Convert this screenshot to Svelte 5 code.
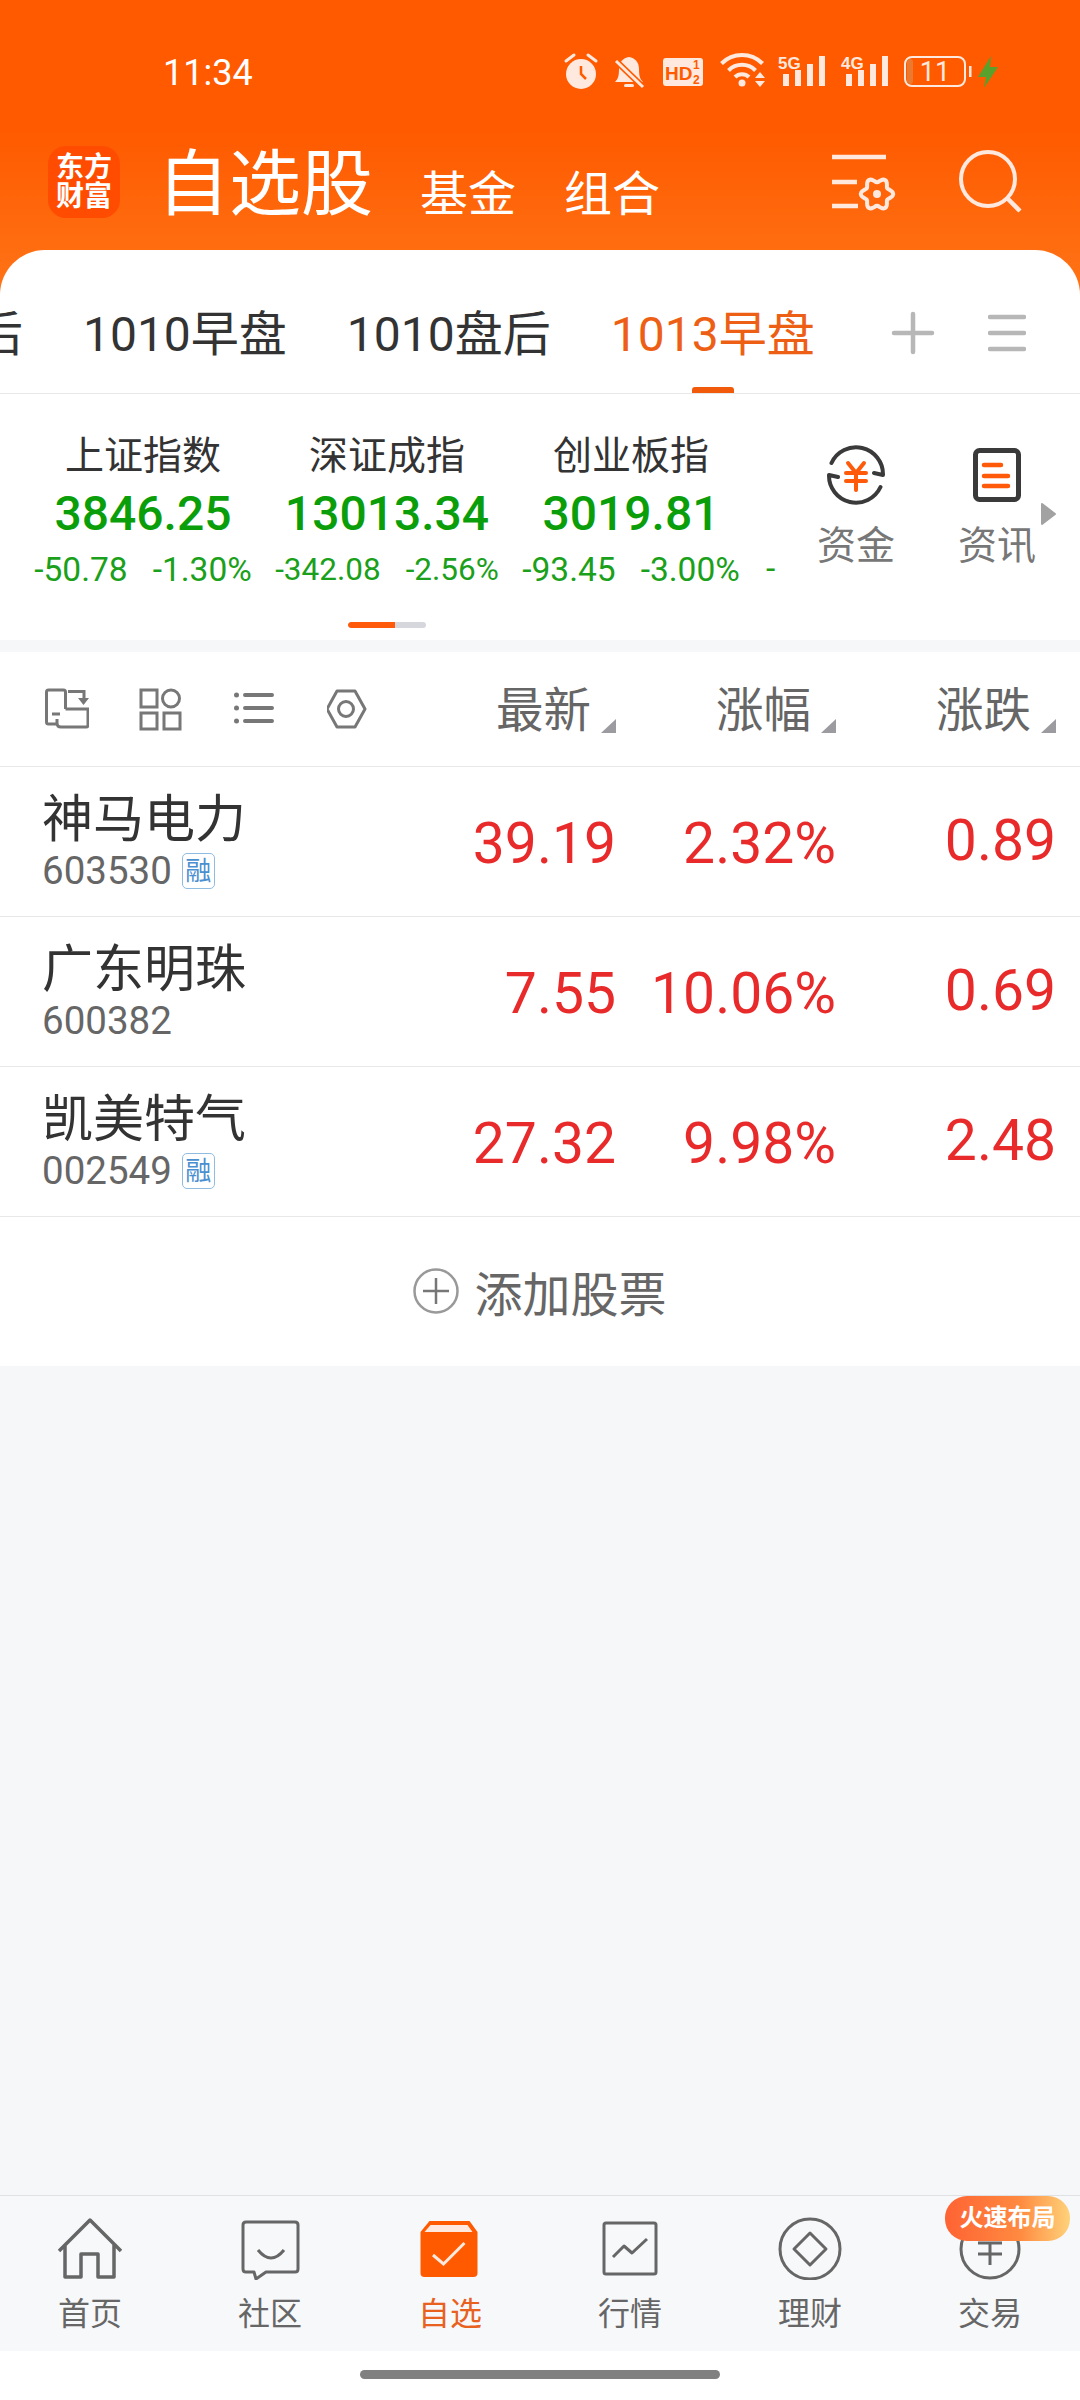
<script>
  const tabs = [
    { label: '1010盘后', first: true },
    { label: '1010早盘' },
    { label: '1010盘后' },
    { label: '1013早盘', active: true }
  ]

  const indices = [
    { name: '上证指数', value: '3846.25', diff: '-50.78', pct: '-1.30%' },
    { name: '深证成指', value: '13013.34', diff: '-342.08', pct: '-2.56%', tight: true },
    { name: '创业板指', value: '3019.81', diff: '-93.45', pct: '-3.00%' }
  ]

  const stocks = [
    { name: '神马电力', code: '603530', margin: true, price: '39.19', pct: '2.32%', diff: '0.89' },
    { name: '广东明珠', code: '600382', margin: false, price: '7.55', pct: '10.06%', diff: '0.69' },
    { name: '凯美特气', code: '002549', margin: true, price: '27.32', pct: '9.98%', diff: '2.48' }
  ]

  const columns = ['最新', '涨幅', '涨跌']

  const nav = [
    { key: 'home', label: '首页' },
    { key: 'chat', label: '社区' },
    { key: 'fav', label: '自选', active: true },
    { key: 'chart', label: '行情' },
    { key: 'wealth', label: '理财' },
    { key: 'trade', label: '交易' }
  ]

  // scalloped outline of the settings cog
  function gearPath (cx, cy) {
    let d = ''
    for (let i = 0; i <= 72; i++) {
      const t = (i / 72) * Math.PI * 2
      const r = 14 + 2.2 * Math.cos(6 * t)
      d += `${i ? 'L' : 'M'}${(cx + r * Math.cos(t)).toFixed(1)} ${(cy + r * Math.sin(t)).toFixed(1)}`
    }
    return d + 'Z'
  }
</script>

<div class="page">
  <header class="head">
    <div class="status">
      <span class="time">11:34</span>
      <svg class="status-icons" width="445" height="44" viewBox="0 0 445 44">
        <!-- alarm -->
        <circle cx="21" cy="25" r="15" fill="#ffe9de" />
        <path d="M6 12l8-6M28 6l8 6" stroke="#ffe9de" stroke-width="3" stroke-linecap="round" />
        <path d="M21 17v8l5 5" stroke="#ff5a00" stroke-width="2.5" fill="none" />
        <!-- muted bell -->
        <path d="M55 33c3-3 4-6 4-13 0-7 4-11 10-12 6 1 10 5 10 12 0 7 1 10 4 13z" fill="#ffe9de" />
        <rect x="64" y="35" width="10" height="3" rx="1.5" fill="#ffe9de" />
        <path d="M55 11l28 27" stroke="#ff5a00" stroke-width="6" />
        <path d="M56 12l27 26" stroke="#ffe9de" stroke-width="3" />
        <!-- HD -->
        <rect x="103" y="9" width="40" height="28" rx="3" fill="#ffe9de" />
        <text x="105" y="31" class="hd">HD</text>
        <text x="133" y="20" class="frac">1</text>
        <text x="133" y="35" class="frac">2</text>
        <!-- wifi -->
        <circle cx="182" cy="34" r="3.5" fill="#ffe9de" />
        <path d="M161.500 14.500a29 29 0 0 1 41 0M168.500 21.500a19 19 0 0 1 27 0M175 28a10 10 0 0 1 14 0" stroke="#ffe9de" stroke-width="4" fill="none" />
        <path d="M200 23l5 6h-10zM200 38l5-6h-10z" fill="#ffe9de" />
        <!-- signal -->
        <text x="218" y="20" class="net">5G</text>
        <path d="M223 25h6v12h-6zM235 21h6v16h-6zM247 15h6v22h-6zM259 7h6v30h-6z" fill="#ffe9de" />
        <text x="281" y="20" class="net">4G</text>
        <path d="M286 25h6v12h-6zM298 21h6v16h-6zM310 15h6v22h-6zM322 7h6v30h-6z" fill="#ffe9de" />
        <!-- battery -->
        <rect x="345" y="8" width="60" height="29" rx="7" fill="none" stroke="#ffe9de" stroke-width="2" />
        <rect x="347" y="10" width="6" height="25" rx="3" fill="#ea7a30" />
        <rect x="409" y="17" width="2.500" height="11" fill="#ffe9de" />
        <text x="375" y="32" class="batt">11</text>
        <path d="M431 7l-13 21h8l-2 11 14-21h-8z" fill="#5aa02c" />
      </svg>
    </div>
    <div class="bar">
      <div class="logo"><span>东方</span><span>财富</span></div>
      <h1>自选股</h1>
      <span class="sub first">基金</span>
      <span class="sub">组合</span>
      <svg class="settings" width="66" height="72" viewBox="0 0 66 72">
        <path d="M2 11h54M2 36h25M2 60h26" stroke="#ffe9de" stroke-width="4.500" />
        <path d={gearPath(47, 48)} fill="none" stroke="#ffe9de" stroke-width="4" />
        <circle cx="47" cy="48" r="4" fill="#ffe9de" />
      </svg>
      <svg class="search" width="70" height="72" viewBox="0 0 70 72">
        <circle cx="32" cy="33" r="27" fill="none" stroke="#ffe9de" stroke-width="4" />
        <path d="M51 52l13 13" stroke="#ffe9de" stroke-width="4.500" />
      </svg>
    </div>
  </header>

  <section class="sheet">
    <div class="tabs">
      <div class="tab-list">
        {#each tabs as tab}
          <div class="tab" class:first={tab.first} class:active={tab.active}>
            {tab.label}
            {#if tab.active}<i class="mark"></i>{/if}
          </div>
        {/each}
      </div>
      <svg class="plus" width="44" height="44" viewBox="0 0 44 44">
        <path d="M3 22h38M22 3v38" stroke="#b7b7b7" stroke-width="4.500" stroke-linecap="round" />
      </svg>
      <svg class="menu" width="38" height="40" viewBox="0 0 38 40">
        <path d="M2 4h34M2 20h34M2 36h34" stroke="#b7b7b7" stroke-width="4.500" stroke-linecap="round" />
      </svg>
    </div>

    <div class="market">
      <div class="market-top">
        <div class="indices">
          {#each indices as item}
            <div class="index">
              <div class="index-name">{item.name}</div>
              <div class="index-value">{item.value}</div>
              <div class="index-diff" class:tight={item.tight}><span>{item.diff}</span><span>{item.pct}</span></div>
            </div>
          {/each}
          <div class="index-dash">-</div>
        </div>
        <div class="shortcut">
          <svg width="60" height="60" viewBox="0 0 60 60">
            <path d="M5.500 18A27 27 0 0 1 57 30l-9-2M3 30l9 2M3 30a27 27 0 0 0 51.500 12" fill="none" stroke="#3a3a3a" stroke-width="4" stroke-linecap="round" stroke-linejoin="round" />
            <path d="M22 18l8 10 8-10M20 28h20M20 36h20M30 28v17" fill="none" stroke="#ff5a0a" stroke-width="4" stroke-linecap="round" />
          </svg>
          <span>资金</span>
        </div>
        <div class="shortcut">
          <svg width="60" height="60" viewBox="0 0 60 60">
            <rect x="7.500" y="5.500" width="43" height="49" rx="4" fill="none" stroke="#3a3a3a" stroke-width="5" />
            <path d="M16 20h17M16 31h24M16 41h24" stroke="#ff5a0a" stroke-width="4.500" stroke-linecap="round" />
          </svg>
          <span>资讯</span>
        </div>
        <svg class="more" width="15" height="24" viewBox="0 0 15 24"><path d="M1 2l13 10L1 22z" fill="#a2a2a2" stroke="#a2a2a2" stroke-width="2" stroke-linejoin="round" /></svg>
      </div>
      <div class="pager"><i></i></div>
    </div>

    <div class="columns">
      <div class="tools">
        <svg width="44" height="44" viewBox="0 0 44 44" fill="none" stroke="#777" stroke-width="3">
          <path d="M20.500 22V5q0-2-2-2H3.500q-2 0-2 2v30q0 2 2 2H12" />
          <path d="M7 27h8M23 4.500h16V12" />
          <path d="M33 11h11l-5.500 7z" fill="#777" stroke="none" />
          <path d="M20.500 22H43v16q0 2-2 2H16q-4 0-4-4v-4" />
        </svg>
        <svg width="44" height="44" viewBox="0 0 44 44" fill="none" stroke="#777" stroke-width="3">
          <rect x="2" y="3" width="16" height="17" />
          <circle cx="32" cy="11.500" r="8.500" />
          <rect x="2" y="26" width="16" height="16" />
          <rect x="25" y="26" width="16" height="16" />
        </svg>
        <svg width="44" height="44" viewBox="0 0 44 44">
          <path d="M12 8h27M12 21h27M12 34h27" stroke="#777" stroke-width="4" stroke-linecap="round" />
          <circle cx="3.500" cy="8" r="2.500" fill="#777" />
          <circle cx="3.500" cy="21" r="2.500" fill="#777" />
          <circle cx="3.500" cy="34" r="2.500" fill="#777" />
        </svg>
        <svg width="44" height="44" viewBox="0 0 44 44" fill="none" stroke="#777" stroke-width="3">
          <path d="M10 4h18l10 18-10 18H10L0 22z" stroke-linejoin="round" />
          <circle cx="19" cy="22" r="7.500" />
        </svg>
      </div>
      {#each columns as col}
        <div class="col">
          <span>{col}</span><i class="corner"></i>
        </div>
      {/each}
    </div>

    {#each stocks as stock}
      <div class="row">
        <div class="stock">
          <div class="stock-name">{stock.name}</div>
          <div class="stock-code">
            {stock.code}
            {#if stock.margin}<span class="tag">融</span>{/if}
          </div>
        </div>
        <div class="num">{stock.price}</div>
        <div class="num">{stock.pct}</div>
        <div class="num last">{stock.diff}</div>
      </div>
    {/each}

    <div class="add">
      <svg width="46" height="46" viewBox="0 0 46 46" fill="none" stroke="#999" stroke-width="2.500">
        <circle cx="23" cy="23" r="21.500" />
        <path d="M10 23h26M23 10v26" stroke="#777" />
      </svg>
      <span>添加股票</span>
    </div>
  </section>

  <main class="empty"></main>

  <nav class="nav">
    {#each nav as item}
      <div class="nav-item" class:active={item.active}>
        <svg width="64" height="64" viewBox="0 0 64 64" fill="none" stroke="#666" stroke-width="3.500" stroke-linejoin="round">
          {#if item.key === 'home'}
            <path d="M1 35L32 4l31 31M7 29v32h16V38h17v23h16V29" />
          {:else if item.key === 'chat'}
            <path d="M8 6h49q3 0 3 3v44q0 3-3 3H28L18 63l-2-7H8q-3 0-3-3V9q0-3 3-3z" stroke-width="3" />
            <path d="M20 34q13 16 26 0" stroke-width="3" />
          {:else if item.key === 'fav'}
            <path d="M11.500 5h40l8 11v41q0 4-4 4H6.500q-4 0-4-4V16z" fill="#ff5a00" stroke="none" />
            <path d="M12.500 9h37l5 7H6.500z" fill="#ffe9de" stroke="none" />
            <path d="M15 39l10.500 9 21-21" stroke="#ffe9de" stroke-width="3" stroke-linejoin="miter" />
          {:else if item.key === 'chart'}
            <rect x="6" y="7" width="52" height="51" rx="2" stroke-width="3" />
            <path d="M15 41l11-11 8 7 15-14" stroke-width="3" />
          {:else if item.key === 'wealth'}
            <circle cx="32" cy="33" r="30" stroke-width="3" />
            <path d="M32 17l16 16-16 16-16-16z" stroke-width="3" />
          {:else}
            <circle cx="32" cy="33" r="29" stroke-width="3" />
            <path d="M20 27h24M20 38h24M32 27v22" stroke-width="3" />
          {/if}
        </svg>
        <span>{item.label}</span>
        {#if item.key === 'trade'}<em class="promo">火速布局</em>{/if}
      </div>
    {/each}
  </nav>
  <div class="home-bar"><i></i></div>
</div>

<style>
  :global(body) {
    margin: 0;
    background: #f6f7f9;
  }

  .page {
    width: 1080px;
    height: 2400px;
    display: flex;
    flex-direction: column;
    overflow: hidden;
    font-family: Roboto, "Noto Sans CJK SC", sans-serif;
    color: #333;
  }

  .head {
    height: 295px;
    box-sizing: border-box;
    flex: none;
    background: linear-gradient(#ff5a00 0, #ff5a00 130px, #ff7417 295px);
    color: #fff;
  }

  .status {
    display: flex;
    align-items: center;
    height: 50px;
    padding-top: 48px;
  }

  .time {
    width: 92px;
    margin-left: 163px;
    font-size: 36px;
    line-height: 50px;
    color: #fff;
  }

  .status-icons {
    margin-left: 305px;
    margin-top: -4px;
  }

  .hd {
    font: 700 19px "Liberation Sans", sans-serif;
    fill: #ff5a00;
  }

  .frac {
    font: 700 12px "Liberation Sans", sans-serif;
    fill: #ff5a00;
  }

  .net {
    font: 700 17px "Liberation Sans Narrow", "Liberation Sans", sans-serif;
    fill: #ffe9de;
  }

  .batt {
    font: 400 27px Roboto, sans-serif;
    fill: #ffe9de;
    text-anchor: middle;
  }

  .bar {
    display: flex;
    align-items: flex-end;
    margin-top: 48px;
    padding-left: 48px;
  }

  .logo {
    width: 72px;
    height: 72px;
    border-radius: 18px;
    background: #ff4c00;
    display: flex;
    flex-direction: column;
    align-items: center;
    justify-content: center;
    font-weight: 700;
    font-size: 28px;
    line-height: 29px;
  }

  h1 {
    margin: 0 0 -3px 37px;
    font-size: 72px;
    font-weight: 400;
    line-height: 72px;
  }

  .sub {
    font-size: 48px;
    line-height: 48px;
    margin-left: 48px;
    margin-bottom: -1px;
  }

  .sub.first {
    margin-left: 47px;
  }

  .settings {
    margin-left: 170px;
  }

  .search {
    margin-left: 60px;
  }

  .sheet {
    flex: none;
    margin-top: -45px;
    background: #fff;
    border-radius: 45px 45px 0 0;
    position: relative;
  }

  .tabs {
    height: 143px;
    display: flex;
    border-bottom: 1px solid #e8e8e8;
  }

  .tab-list {
    width: 885px;
    flex: none;
    display: flex;
    gap: 60px;
    overflow: hidden;
  }

  .tab {
    flex: none;
    height: 143px;
    box-sizing: border-box;
    padding-top: 61px;
    font-size: 48px;
    line-height: 48px;
    display: flex;
    flex-direction: column;
    align-items: center;
    color: #333;
  }

  .tab.first {
    margin-left: -181px;
  }

  .tab.active {
    color: #ee5f16;
  }

  .mark {
    display: block;
    width: 42px;
    height: 6px;
    margin-top: auto;
    border-radius: 3px 3px 0 0;
    background: #f15a0a;
  }

  .plus {
    margin: 61px 0 0 6px;
  }

  .menu {
    margin: 63px 0 0 53px;
  }

  .market {
    height: 246px;
    box-sizing: border-box;
    position: relative;
  }

  .market-top {
    display: flex;
  }

  .indices {
    width: 785px;
    height: 195px;
    box-sizing: border-box;
    flex: none;
    display: flex;
    padding: 40px 0 0 21px;
    overflow: hidden;
  }

  .index {
    flex: none;
    width: 244px;
    display: flex;
    flex-direction: column;
    align-items: center;
  }

  .index-name {
    font-size: 39px;
    line-height: 44px;
    color: #333;
  }

  .index-value {
    margin-top: 8px;
    font-size: 48px;
    line-height: 56px;
    font-weight: 500;
    color: #0a9e0a;
  }

  .index-diff {
    margin-top: 8px;
    display: flex;
    gap: 25px;
    font-size: 33.500px;
    line-height: 40px;
    white-space: nowrap;
    color: #1aa01a;
  }

  .index-diff.tight {
    font-size: 31.500px;
  }

  .index-dash {
    align-self: flex-end;
    margin-left: 13px;
    font-size: 33.500px;
    line-height: 40px;
    color: #1aa01a;
  }

  .shortcut {
    width: 142px;
    flex: none;
    padding-top: 51px;
    display: flex;
    flex-direction: column;
    align-items: center;
    font-size: 39px;
    line-height: 44px;
    color: #777;
  }

  .shortcut span {
    margin-top: 19px;
  }

  .shortcut + .shortcut span {
    margin-left: -2px;
  }

  .more {
    position: absolute;
    left: 1041px;
    top: 108px;
  }

  .pager {
    width: 78px;
    height: 6px;
    margin: 33px 0 0 348px;
    border-radius: 3px;
    background: #d5d7dc;
    overflow: hidden;
  }

  .pager i {
    display: block;
    width: 47px;
    height: 6px;
    background: #ff5a0a;
    border-radius: 3px 0 0 3px;
  }

  .columns {
    margin-top: 12px;
    height: 114px;
    display: flex;
    align-items: center;
    padding-right: 24px;
    box-shadow: 0 -12px 0 #f6f7f9;
    background: #fff;
  }

  .tools {
    flex: 1;
    display: flex;
    gap: 50px;
    padding-left: 45px;
  }

  .col {
    width: 220px;
    height: 114px;
    display: flex;
    justify-content: flex-end;
    align-items: center;
    font-size: 47.500px;
    color: #666;
  }

  .col span {
    margin-top: -6px;
  }

  .corner {
    width: 15px;
    height: 14px;
    margin: 34px 0 0 10px;
    background: #9b9ba0;
    clip-path: polygon(100% 0, 100% 100%, 0 100%);
  }

  .row {
    height: 149px;
    display: flex;
    align-items: center;
    padding-right: 24px;
    border-top: 1px solid #e8e8e8;
  }

  .stock {
    flex: 1;
    padding: 1px 0 0 42px;
  }

  .stock-name {
    font-size: 51px;
    line-height: 56px;
    color: #333;
  }

  .stock-code {
    display: flex;
    align-items: center;
    gap: 10px;
    font-size: 38.500px;
    line-height: 44px;
    margin-top: 1px;
    color: #666;
  }

  .tag {
    width: 31px;
    height: 34px;
    border: 1px solid #8fbce0;
    border-radius: 5px;
    font-size: 26px;
    line-height: 34px;
    text-align: center;
    color: #4a8fd0;
  }

  .num {
    width: 220px;
    text-align: right;
    font-size: 57px;
    line-height: 64px;
    padding-top: 5px;
    color: #e82a2a;
  }

  .num.last {
    padding: 0 0 1px;
  }

  .add {
    height: 150px;
    padding-bottom: 2px;
    border-top: 1px solid #e8e8e8;
    box-sizing: border-box;
    display: flex;
    align-items: center;
    justify-content: center;
    gap: 15px;
    font-size: 48px;
    color: #666;
  }

  .empty {
    flex: 1;
    background: #f6f7f9;
  }

  .nav {
    flex: none;
    height: 155px;
    display: flex;
    background: #f7f8fa;
    border-top: 1px solid #e0e1e4;
  }

  .nav-item {
    flex: 1;
    position: relative;
    padding-top: 20px;
    display: flex;
    flex-direction: column;
    align-items: center;
    font-size: 32px;
    line-height: 36px;
    color: #666;
  }

  .nav-item span {
    margin-top: 16px;
  }

  .nav-item.active {
    color: #e8611e;
  }

  .promo {
    position: absolute;
    top: 0;
    left: 45px;
    width: 125px;
    height: 45px;
    border-radius: 22px;
    background: linear-gradient(90deg, #ff6333, #ff8a40 60%, #ffd27a);
    color: #fff;
    font-style: normal;
    font-weight: 700;
    font-size: 24px;
    line-height: 45px;
    text-align: center;
  }

  .home-bar {
    flex: none;
    height: 49px;
    background: #fff;
    display: flex;
    justify-content: center;
  }

  .home-bar i {
    display: block;
    width: 360px;
    height: 9px;
    margin-top: 19px;
    border-radius: 5px;
    background: #808080;
  }
</style>
